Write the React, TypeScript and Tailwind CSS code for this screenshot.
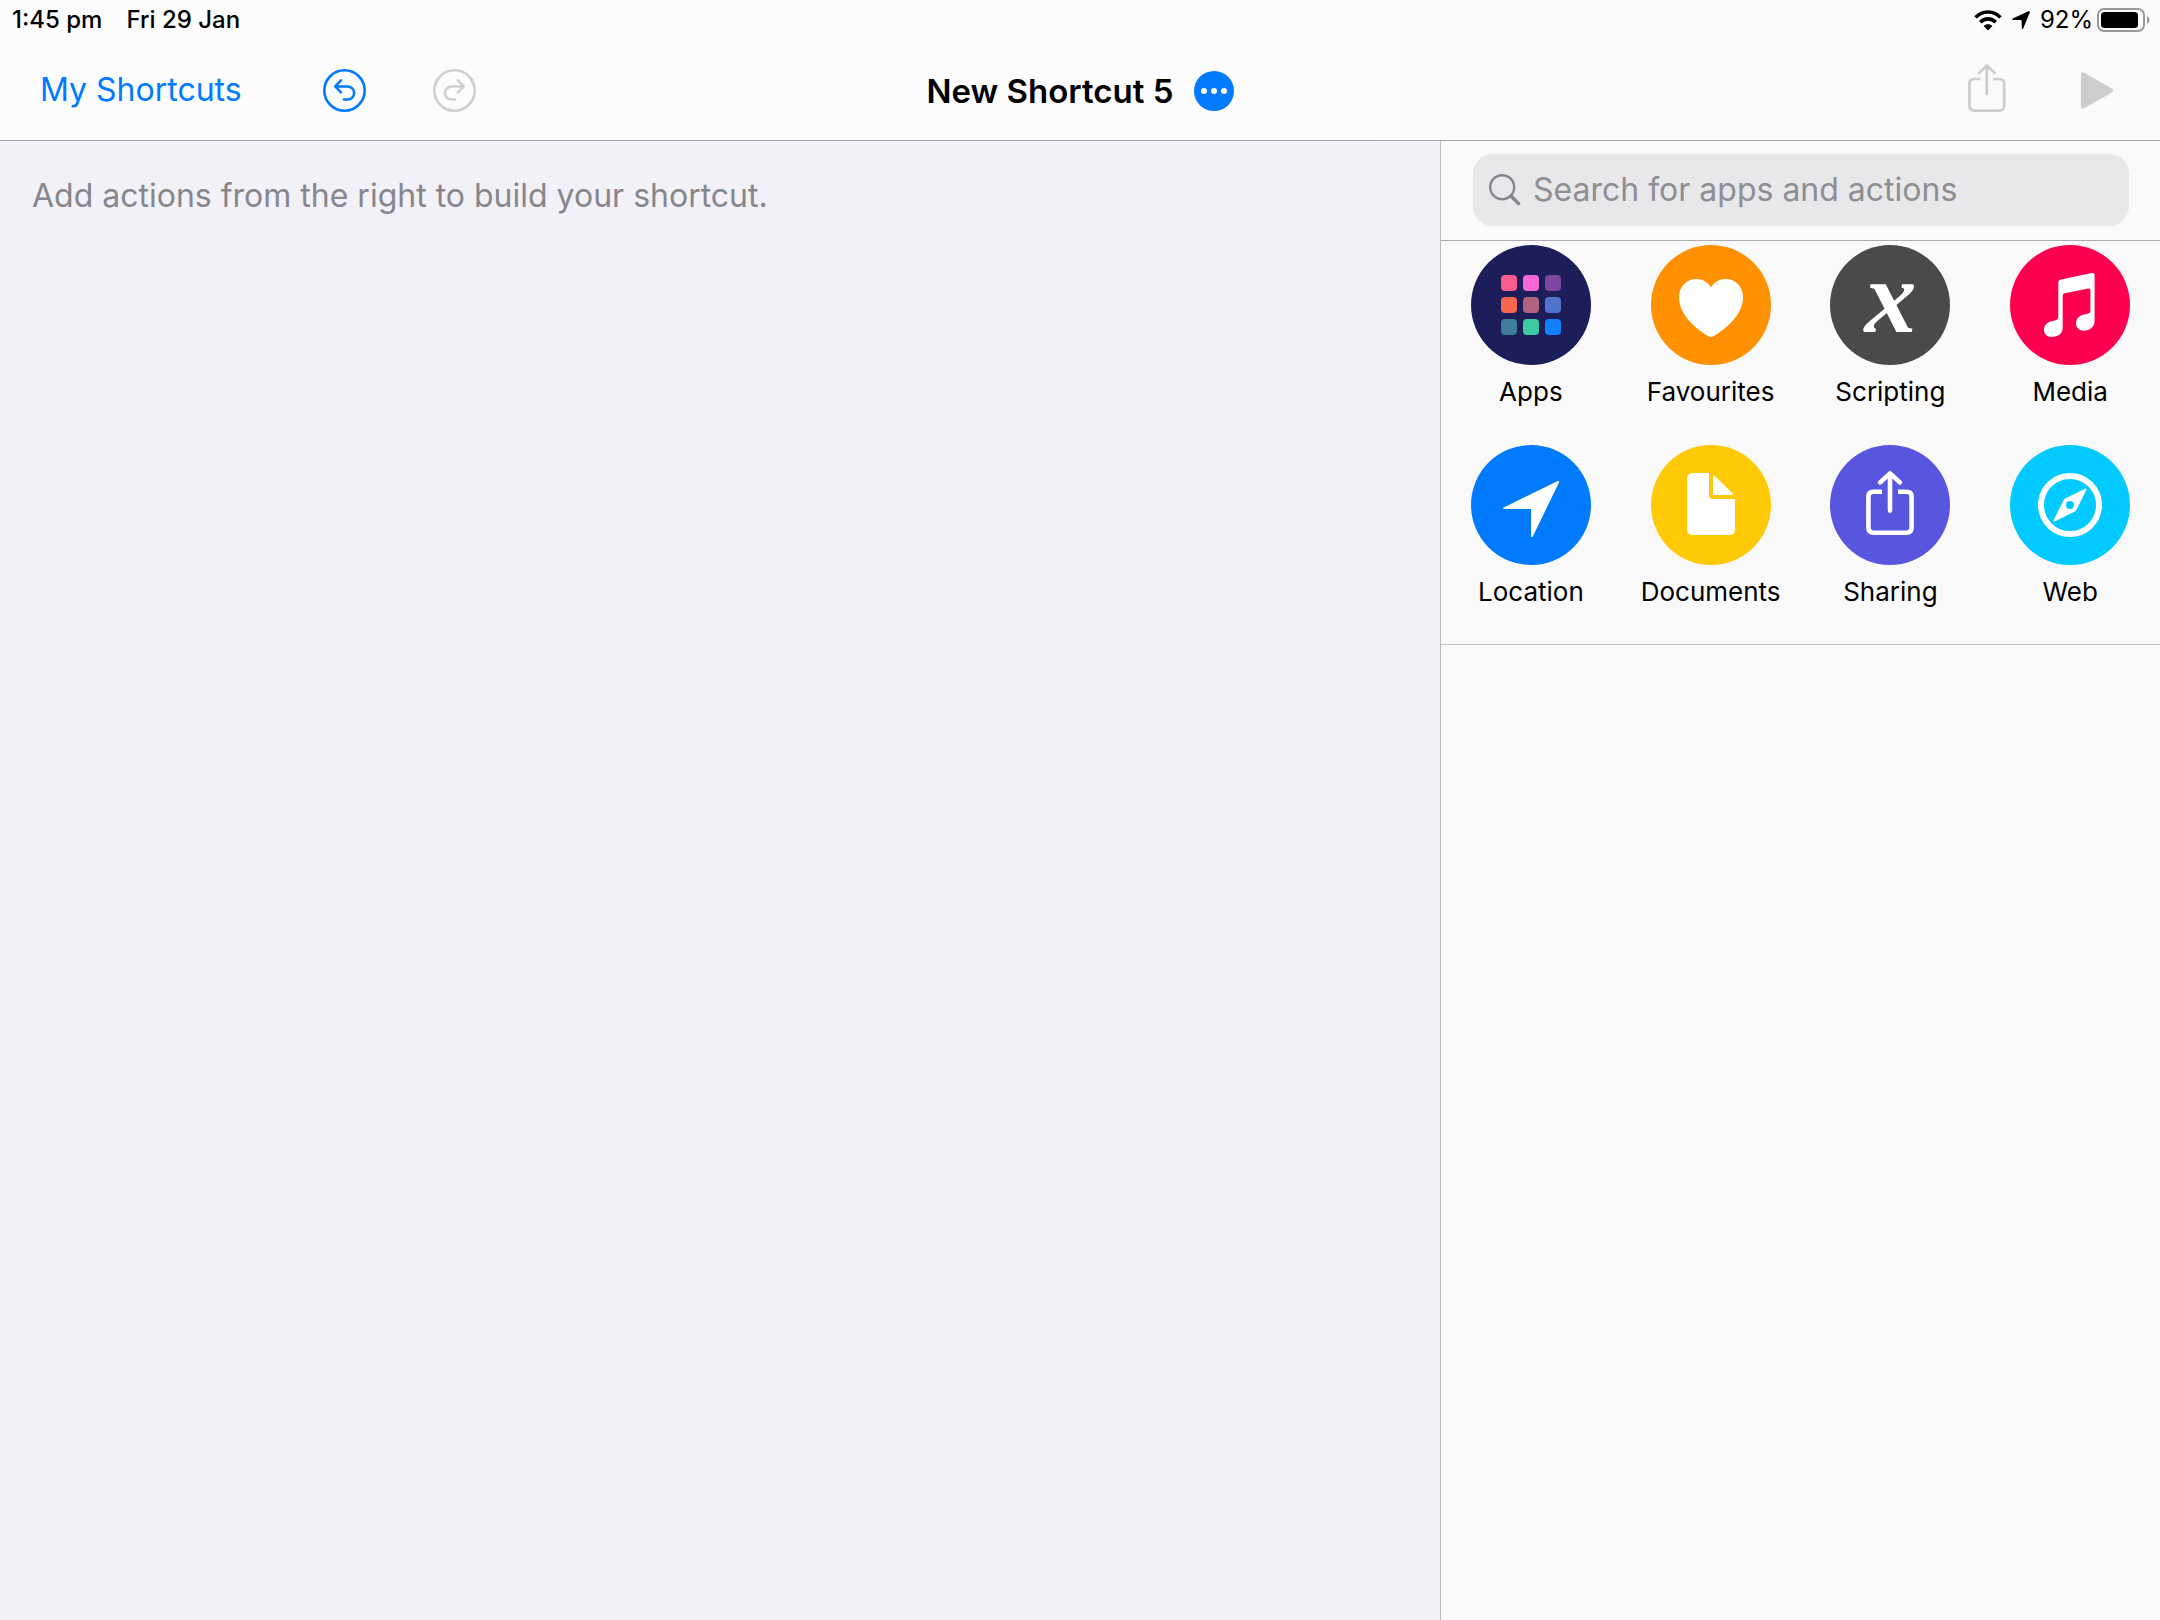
import type { ReactNode } from "react";

function WifiIcon() {
  return (
    <svg width="28" height="21" viewBox="0 0 28 21" fill="none" aria-hidden="true">
      <path d="M1.6 7.4C8.3 0.1 19.7 0.1 26.4 7.4" stroke="#000" strokeWidth="3.6" />
      <path d="M6.3 12.2C10.5 7.8 17.5 7.8 21.7 12.2" stroke="#000" strokeWidth="3.6" />
      <path d="M9.6 15.9C12.1 13.6 15.9 13.6 18.4 15.9L14.8 19.8Q14 20.6 13.2 19.8Z" fill="#000" />
    </svg>
  );
}

function StatusArrowIcon() {
  return (
    <svg width="18" height="19" viewBox="0 0 18 19" aria-hidden="true">
      <path d="M16.4 0.2Q18.3-0.2 17.8 1.6L11.2 17.6Q10.5 18.8 9.9 17.5L9.6 9.8Q9.5 9.2 8.9 9.1L0.9 8.9Q-0.5 8.3 0.7 7.5Z" />
    </svg>
  );
}

function BatteryIcon() {
  return (
    <svg width="53" height="24" viewBox="0 0 53 24" aria-hidden="true">
      <rect x="1" y="1" width="46" height="22" rx="6" fill="none" stroke="#999" strokeWidth="2" />
      <rect x="4" y="4" width="37" height="16" rx="3.5" />
      <path d="M50 8Q52.6 9.4 52.6 12T50 16Z" fill="#999" />
    </svg>
  );
}

function TurnIcon() {
  return (
    <svg width="43" height="43" viewBox="0 0 43 43" fill="none" stroke="currentColor" strokeLinecap="round" strokeLinejoin="round" aria-hidden="true">
      <circle cx="21.5" cy="21.5" r="20.2" strokeWidth="2.6" />
      <path d="M18 11.4L12.2 17.4L18 23.4M12.6 17.4H24.6A6.5 6.5 0 0 1 24.6 30.5H20.8" strokeWidth="2.5" />
    </svg>
  );
}

function ShareIcon() {
  return (
    <svg width="38" height="52" viewBox="0 0 38 52" fill="none" stroke="currentColor" strokeWidth="2.7" aria-hidden="true">
      <path d="M12.4 15H6.3Q1.4 15 1.4 19.8V41.8Q1.4 46.6 6.3 46.6H31.3Q36.2 46.6 36.2 41.8V19.8Q36.2 15 31.3 15H25" />
      <path d="M18.8 1.6V30M11 9L18.8 1.6L26.6 9" strokeLinecap="round" strokeLinejoin="round" />
    </svg>
  );
}

function PlayIcon() {
  return (
    <svg width="32" height="37" viewBox="0 0 32 37" fill="currentColor" aria-hidden="true">
      <path d="M0 2.6Q0-0.9 3.2 0.7L30.8 16.6Q33.2 18.5 30.8 20.4L3.2 36.3Q0 37.9 0 34.4Z" />
    </svg>
  );
}

function AppsGlyph() {
  return (
    <span className="grid grid-cols-3 gap-1.5">
      <span className="size-4 rounded bg-[#fc5c8b]" />
      <span className="size-4 rounded bg-[#f767d8]" />
      <span className="size-4 rounded bg-[#7e479f]" />
      <span className="size-4 rounded bg-[#fb6651]" />
      <span className="size-4 rounded bg-[#b0647f]" />
      <span className="size-4 rounded bg-[#5173ce]" />
      <span className="size-4 rounded bg-[#3f7d9b]" />
      <span className="size-4 rounded bg-[#3dcaa3]" />
      <span className="size-4 rounded bg-[#1281ff]" />
    </span>
  );
}

function Glyph({ children }: { children: ReactNode }) {
  return (
    <svg width="120" height="120" viewBox="0 0 120 120" fill="#fff" aria-hidden="true">
      {children}
    </svg>
  );
}

const categories: { label: string; color: string; icon: ReactNode }[] = [
  { label: "Apps", color: "bg-[#1c1d59]", icon: <AppsGlyph /> },
  {
    label: "Favourites",
    color: "bg-[#ff9000]",
    icon: (
      <Glyph>
        <path d="M60 42.5C63 37 68.5 34 74.5 34C84.5 34 92 41.5 92 52.5C92 68 78 82 62.5 91.2Q60 92.6 57.5 91.2C42 82 28 68 28 52.5C28 41.5 35.5 34 45.5 34C51.5 34 57 37 60 42.5Z" />
      </Glyph>
    ),
  },
  {
    label: "Scripting",
    color: "bg-[#4a4a4a]",
    icon: (
      <span aria-hidden="true" className="pb-4 font-['Liberation_Serif',serif] text-[104px] leading-none font-bold text-white italic">
        x
      </span>
    ),
  },
  {
    label: "Media",
    color: "bg-[#ff0050]",
    icon: (
      <Glyph>
        <path d="M48.3 37.5Q48.3 35 51 34.4L82 28Q84.6 27.7 84.6 30V76C84.6 82 79.5 85.7 74 85.7C69 85.7 66 82.5 66 78.5C66 73.5 69.5 70.5 74 69.6L78 68.8Q80.4 68.2 80.4 66V45Q80.4 43.2 78.5 43.5L54.5 48.3Q52.7 48.7 52.7 50.5V82.5C52.7 88.5 48 92 42 92C37 92 34 89 34 85C34 80 37.5 77 42 76L46 75.2Q48.3 74.6 48.3 72Z" />
      </Glyph>
    ),
  },
  {
    label: "Location",
    color: "bg-[#007aff]",
    icon: (
      <Glyph>
        <path d="M86.8 36Q88.5 35.7 88 37.4L61.8 91.4Q60.6 92.8 60 91.4V64H33Q31.2 63.6 32.6 62.4Z" />
      </Glyph>
    ),
  },
  {
    label: "Documents",
    color: "bg-[#ffc905]",
    icon: (
      <Glyph>
        <path d="M42 28H58V50Q58 54 62 54H84V84Q84 90 78 90H42Q36 90 36 84V34Q36 28 42 28Z" />
        <path d="M62 31Q62 29.4 63.2 30.6L81.8 48.6Q83 50 81.4 50H63Q62 50 62 49Z" />
      </Glyph>
    ),
  },
  {
    label: "Sharing",
    color: "bg-[#5856de]",
    icon: (
      <Glyph>
        <path d="M52 46.7H43.5Q38.4 46.7 38.4 51.8V82.6Q38.4 87.7 43.5 87.7H76.5Q81.6 87.7 81.6 82.6V51.8Q81.6 46.7 76.5 46.7H68" fill="none" stroke="#fff" strokeWidth="4.6" />
        <path d="M60 29V65.6M50.2 37.4L60 28.4L69.8 37.4" fill="none" stroke="#fff" strokeWidth="4.6" strokeLinecap="round" strokeLinejoin="round" />
      </Glyph>
    ),
  },
  {
    label: "Web",
    color: "bg-[#00caff]",
    icon: (
      <Glyph>
        <circle cx="60" cy="60" r="29" fill="none" stroke="#fff" strokeWidth="6" />
        <path
          fillRule="evenodd"
          d="M75 43.8Q77 43 76.3 45L66.6 64.6Q66 65.8 64.8 66.4L45 76.3Q43 77 43.7 75L53.4 55.4Q54 54.2 55.2 53.6ZM60 56A4 4 0 1 0 60 64A4 4 0 1 0 60 56Z"
        />
      </Glyph>
    ),
  },
];

function StatusBar() {
  return (
    <div className="flex h-10 items-center justify-between pr-2.5 pl-3 text-[24px] leading-none font-medium text-black">
      <div className="flex gap-6">
        <span>1:45 pm</span>
        <span>Fri 29 Jan</span>
      </div>
      <div className="flex items-center">
        <WifiIcon />
        <span className="ml-2.5">
          <StatusArrowIcon />
        </span>
        <span className="ml-2.5 font-normal">92%</span>
        <span className="ml-1">
          <BatteryIcon />
        </span>
      </div>
    </div>
  );
}

function Toolbar() {
  return (
    <div className="grid h-[100px] grid-cols-[1fr_auto_1fr] items-center px-10">
      <div className="flex items-center">
        <button type="button" className="text-[32px] leading-none text-[#007aff]">
          My Shortcuts
        </button>
        <button type="button" aria-label="Undo" className="ml-[81px] text-[#007aff]">
          <TurnIcon />
        </button>
        <button type="button" aria-label="Redo" disabled className="ml-[67px] -scale-x-100 text-[#cfcfd0]">
          <TurnIcon />
        </button>
      </div>
      <div className="flex items-center gap-5 pt-0.5">
        <h1 className="text-[33px] leading-none font-semibold text-black">New Shortcut 5</h1>
        <button type="button" aria-label="Shortcut details" className="flex size-10 items-center justify-center gap-1 rounded-full bg-[#007aff]">
          <span className="size-1.5 rounded-full bg-white" />
          <span className="size-1.5 rounded-full bg-white" />
          <span className="size-1.5 rounded-full bg-white" />
        </button>
      </div>
      <div className="flex items-center justify-end gap-[75px] pr-[7px] text-[#cdcdcd]">
        <button type="button" aria-label="Share" disabled>
          <ShareIcon />
        </button>
        <button type="button" aria-label="Run" disabled>
          <PlayIcon />
        </button>
      </div>
    </div>
  );
}

function SearchField() {
  return (
    <div className="border-b border-[#acacaf] bg-[#fafafa] pt-[13px] pr-[31px] pb-3.5 pl-8">
      <label className="flex h-[72px] items-center gap-3 rounded-[20px] bg-[#e8e8ea] px-4">
        <svg width="32" height="32" viewBox="0 0 32 32" fill="none" stroke="#85858a" strokeLinecap="round" aria-hidden="true" className="shrink-0">
          <circle cx="13.2" cy="13.2" r="12" strokeWidth="2.4" />
          <path d="M22 22L29.6 29.6" strokeWidth="3.4" />
        </svg>
        <input
          type="search"
          aria-label="Search for apps and actions"
          placeholder="Search for apps and actions"
          className="min-w-0 flex-1 bg-transparent text-[32px] text-black outline-none placeholder:text-[#8e8e93]"
        />
      </label>
    </div>
  );
}

export default function App() {
  return (
    <div className="flex min-h-screen flex-col bg-[#f2f1f7] font-['Inter',sans-serif]">
      <header className="border-b border-[#a9a9ac] bg-linear-to-r from-[#fcfcfd] from-60% to-[#fafafa] to-70%">
        <StatusBar />
        <Toolbar />
      </header>
      <div className="flex flex-1">
        <main className="w-2/3 px-8 pt-8">
          <p className="text-[32px] leading-[46px] text-[#87868b]">Add actions from the right to build your shortcut.</p>
        </main>
        <aside className="w-1/3 border-l border-[#bcbbc0] bg-[#f9f9f9]">
          <SearchField />
          <nav aria-label="Action categories" className="grid grid-cols-4 gap-y-[38px] border-b border-[#c2c2c5] pt-1 pb-[37px]">
            {categories.map(({ label, color, icon }) => (
              <button key={label} type="button" className="flex flex-col items-center gap-3">
                <span className={`flex size-[120px] items-center justify-center rounded-full ${color}`}>{icon}</span>
                <span className="text-[26px] leading-[30px] text-black">{label}</span>
              </button>
            ))}
          </nav>
        </aside>
      </div>
    </div>
  );
}
